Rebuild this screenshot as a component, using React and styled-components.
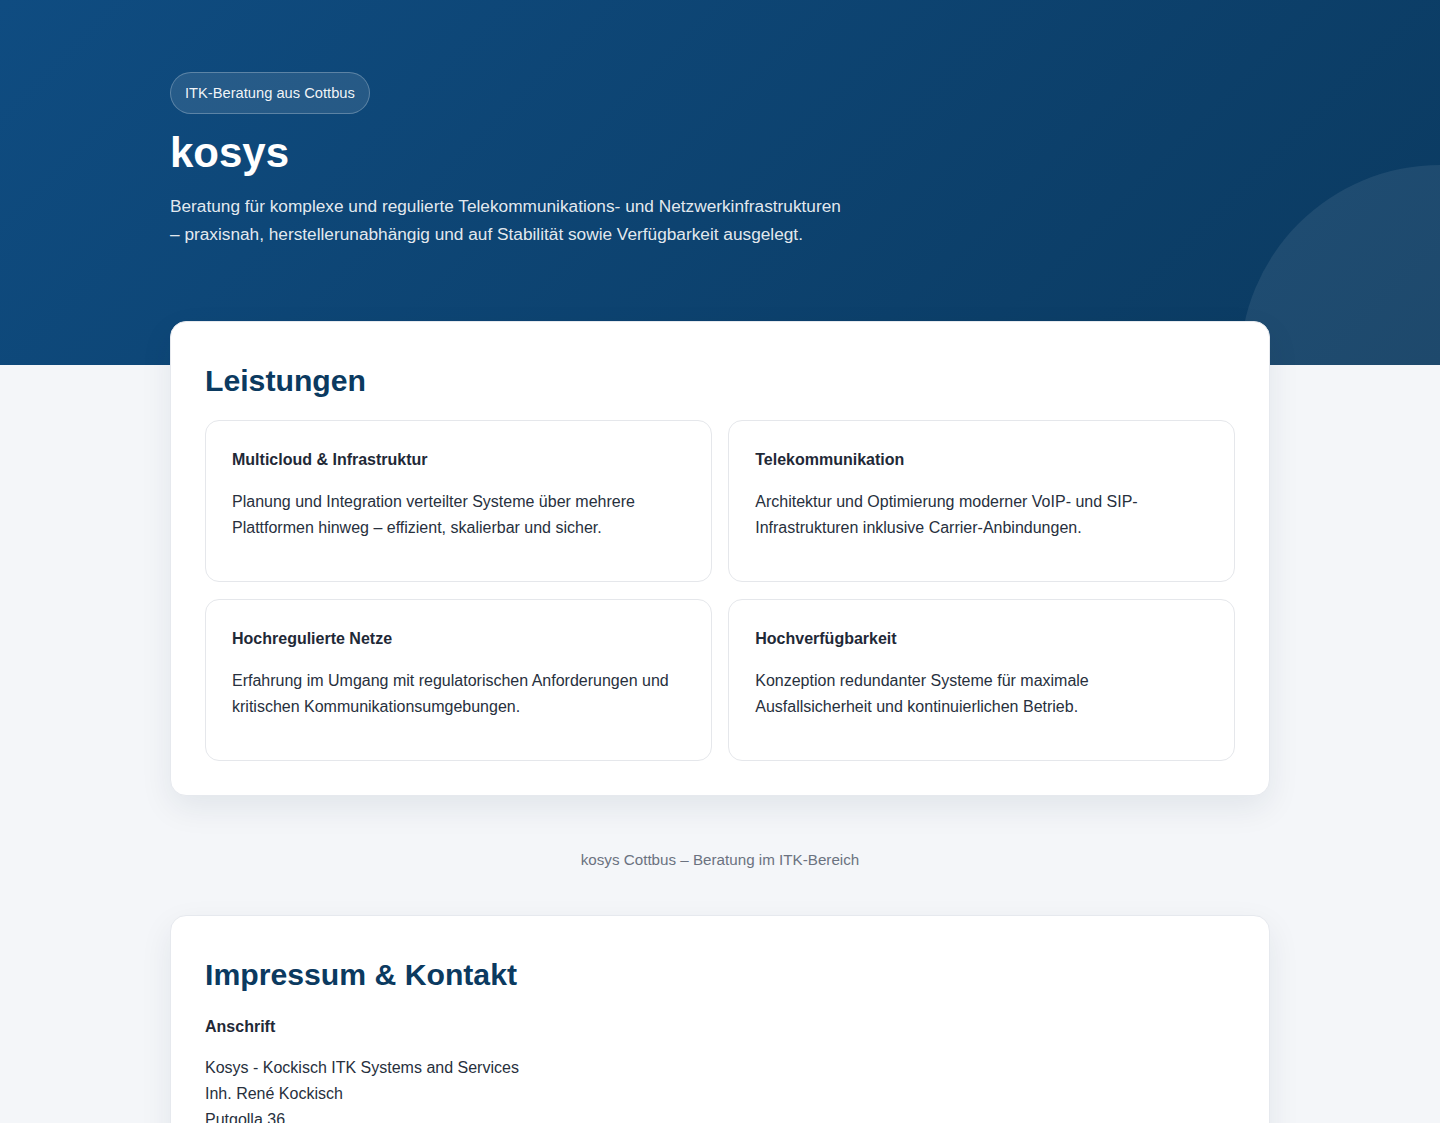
import React from "react";
import styled, { createGlobalStyle } from "styled-components";

const GlobalStyle = createGlobalStyle`
  * { box-sizing: border-box; }
  html, body { margin: 0; padding: 0; }
  body {
    background: #f4f6f9;
    color: #1f2937;
    font-family: "Liberation Sans", Arial, Helvetica, sans-serif;
    line-height: 1.65;
    -webkit-font-smoothing: antialiased;
  }
`;

const Hero = styled.header`
  position: relative;
  overflow: hidden;
  height: 365px;
  padding-top: 72px;
  background: linear-gradient(135deg, #0f4c81 0%, #0b3a60 100%);
  color: #ffffff;

  &::after {
    content: "";
    position: absolute;
    width: 400px;
    height: 400px;
    right: -200px;
    bottom: -200px;
    border-radius: 50%;
    background: rgba(255, 255, 255, 0.08);
  }
`;

const Container = styled.div`
  position: relative;
  z-index: 1;
  width: 1100px;
  margin: 0 auto;
`;

const Badge = styled.span`
  display: inline-block;
  padding: 11px 14px;
  font-size: 14.7px;
  line-height: 18px;
  border-radius: 999px;
  border: 1px solid rgba(255, 255, 255, 0.25);
  background: rgba(255, 255, 255, 0.1);
  color: rgba(255, 255, 255, 0.95);
`;

const Title = styled.h1`
  margin: 12px 0 0;
  font-size: 42px;
  line-height: 53px;
  font-weight: 700;
`;

const Lead = styled.p`
  margin: 13px 0 0;
  max-width: 680px;
  font-size: 17.25px;
  line-height: 28px;
  color: rgba(255, 255, 255, 0.9);
`;

const Main = styled.main`
  width: 1100px;
  margin: -44px auto 0;
  position: relative;
  z-index: 2;
`;

const Card = styled.section`
  background: #ffffff;
  border: 1px solid #e6e9ee;
  border-radius: 16px;
  padding: 34px;
  box-shadow: 0 12px 32px rgba(15, 35, 60, 0.08);
`;

const SectionTitle = styled.h2`
  margin: 0 0 14px;
  font-size: 30.2px;
  line-height: 49.5px;
  font-weight: 700;
  color: #0b3a60;
`;

const Grid = styled.div`
  display: grid;
  grid-template-columns: 1fr 1fr;
  gap: 17px 16.5px;
`;

const Service = styled.article`
  border: 1px solid #e5e7eb;
  border-radius: 14px;
  padding: 25px 26px 40px;
  height: 162px;
`;

const ServiceTitle = styled.h3`
  margin: 0 0 15px;
  font-size: 16px;
  line-height: 28px;
  font-weight: 700;
  color: #1f2937;
`;

const Text = styled.p`
  margin: 0;
  font-size: 16px;
  line-height: 26px;
  color: #27303d;
`;

const Footer = styled.footer`
  padding: 52px 0 43px;
  text-align: center;
  font-size: 15.2px;
  line-height: 24px;
  color: #6b7280;
`;

const SubTitle = styled.h4`
  margin: 1px 0 14px;
  font-size: 16px;
  line-height: 28px;
  font-weight: 700;
  color: #1f2937;
`;

const Address = styled.address`
  font-style: normal;
  font-size: 16px;
  line-height: 26px;
  color: #27303d;
`;

const services = [
  {
    title: "Multicloud & Infrastruktur",
    text: "Planung und Integration verteilter Systeme über mehrere Plattformen hinweg – effizient, skalierbar und sicher.",
  },
  {
    title: "Telekommunikation",
    text: "Architektur und Optimierung moderner VoIP- und SIP-Infrastrukturen inklusive Carrier-Anbindungen.",
  },
  {
    title: "Hochregulierte Netze",
    text: "Erfahrung im Umgang mit regulatorischen Anforderungen und kritischen Kommunikationsumgebungen.",
  },
  {
    title: "Hochverfügbarkeit",
    text: "Konzeption redundanter Systeme für maximale Ausfallsicherheit und kontinuierlichen Betrieb.",
  },
];

export default function App() {
  return (
    <>
      <GlobalStyle />
      <Hero>
        <Container>
          <Badge>ITK-Beratung aus Cottbus</Badge>
          <Title>kosys</Title>
          <Lead>
            Beratung für komplexe und regulierte Telekommunikations- und
            Netzwerkinfrastrukturen – praxisnah, herstellerunabhängig und auf
            Stabilität sowie Verfügbarkeit ausgelegt.
          </Lead>
        </Container>
      </Hero>
      <Main>
        <Card>
          <SectionTitle>Leistungen</SectionTitle>
          <Grid>
            {services.map((s) => (
              <Service key={s.title}>
                <ServiceTitle>{s.title}</ServiceTitle>
                <Text>{s.text}</Text>
              </Service>
            ))}
          </Grid>
        </Card>
        <Footer>kosys Cottbus – Beratung im ITK-Bereich</Footer>
        <Card>
          <SectionTitle>Impressum &amp; Kontakt</SectionTitle>
          <SubTitle>Anschrift</SubTitle>
          <Address>
            Kosys - Kockisch ITK Systems and Services
            <br />
            Inh. René Kockisch
            <br />
            Putgolla 36
            <br />
            03044 Cottbus
          </Address>
        </Card>
      </Main>
    </>
  );
}
